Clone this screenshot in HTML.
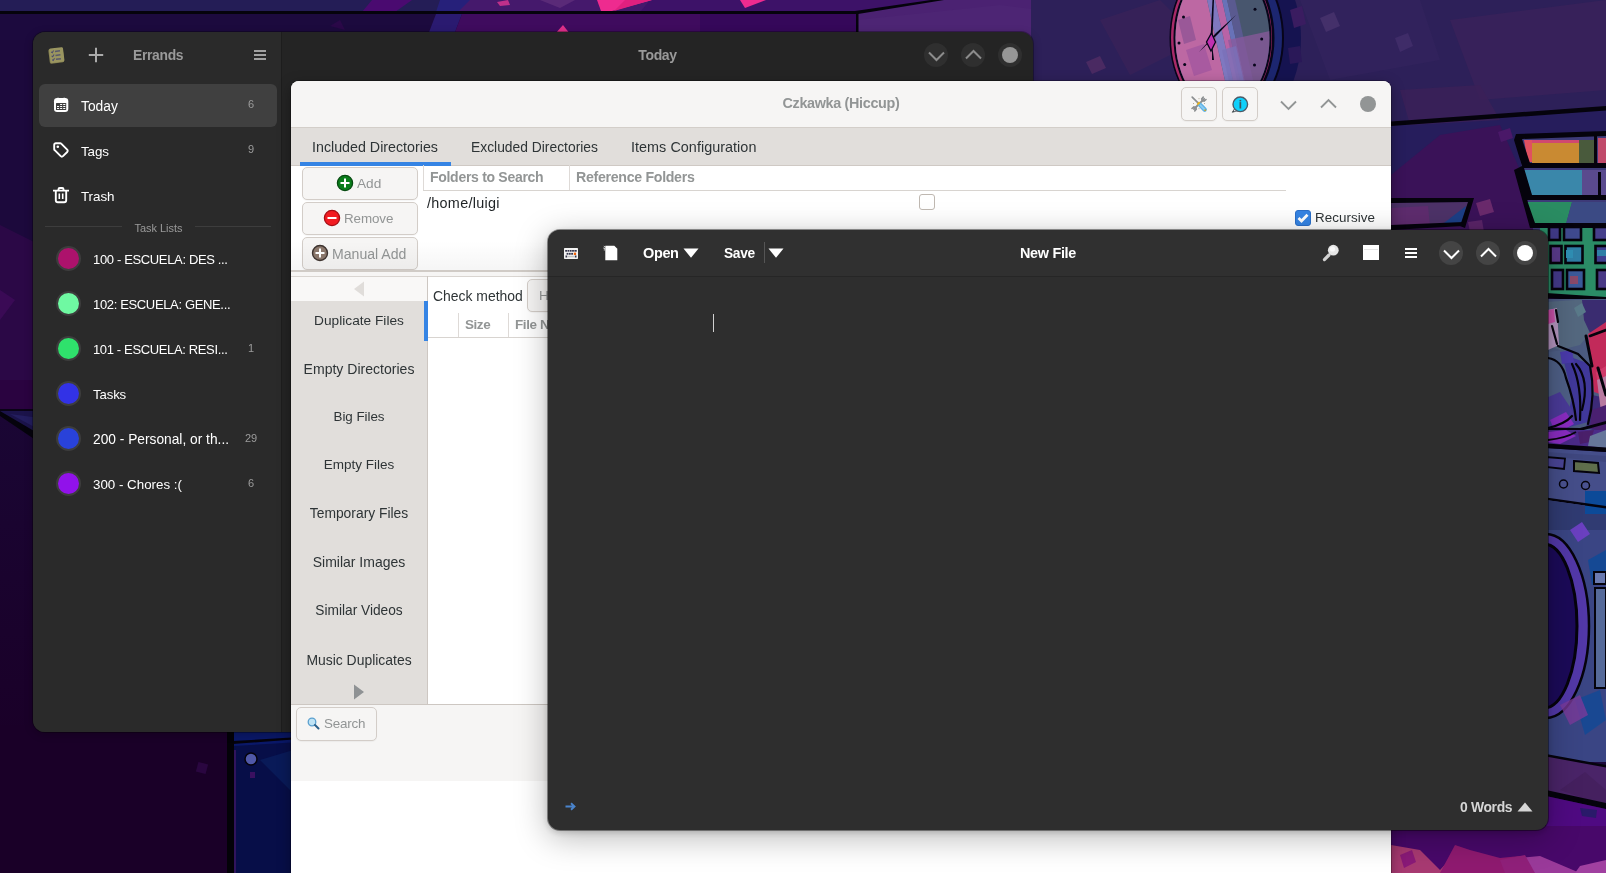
<!DOCTYPE html>
<html><head><meta charset="utf-8"><title>Desktop</title>
<style>
*{box-sizing:border-box;margin:0;padding:0}
html,body{width:1606px;height:873px;overflow:hidden;background:#1c093c}
body{position:relative;font-family:"Liberation Sans","DejaVu Sans",sans-serif;font-size:14px;color:#fff}
#bg{position:absolute;left:0;top:0;width:1606px;height:873px}
.t{position:absolute;white-space:nowrap;line-height:20px;height:20px;margin-top:1px}
.b{font-weight:700}
svg{position:absolute;overflow:visible}
/* Errands */
#err,#czk,#ed{will-change:transform}
#err{position:absolute;left:33px;top:32px;width:1000px;height:700px;border-radius:12px;background:#242424;overflow:hidden;box-shadow:0 0 0 1px rgba(0,0,0,.3),0 2px 8px rgba(0,0,0,.25)}
#err .side{position:absolute;left:0;top:0;width:248px;height:700px;background:#2a2a2a}
#err .sep{position:absolute;left:248px;top:0;width:1px;height:700px;background:#1d1d1d}
#err .row{position:absolute;left:6px;width:238px;height:43px;border-radius:6px}
#err .dot{position:absolute;left:22.7px;width:25px;height:25px;border-radius:50%;border:2px solid #3d3d3d}
#err .cnt{position:absolute;font-size:11px;color:#9c9c9c;line-height:14px;height:14px;text-align:center;width:30px;left:203px}
#err .li{left:60px}
.cbtn{position:absolute;width:24px;height:24px;border-radius:50%}
/* Czkawka */
#czk{position:absolute;left:291px;top:81px;width:1100px;height:800px;border-radius:8px 8px 0 0;background:#fff;overflow:hidden;box-shadow:0 0 0 1px rgba(0,0,0,.25),0 4px 14px rgba(0,0,0,.35);color:#2e3436}
#czk .gbtn{position:absolute;border:1px solid #d3cdc8;border-radius:5px;background:#f6f5f4;box-shadow:0 1px 1px rgba(0,0,0,.04)}
#czk .dim{color:#929595}
#czk .nb{left:0;width:136px;text-align:center}
/* editor */
#ed{position:absolute;left:548px;top:230px;width:1000px;height:600px;border-radius:12px;background:#2e2e2e;overflow:hidden;box-shadow:0 0 0 1px rgba(0,0,0,.4),0 2px 7px rgba(0,0,0,.2),0 7px 32px 1px rgba(0,0,0,.27)}
</style></head>
<body>
<svg id="bg" viewBox="0 0 1606 873">
<rect width="1606" height="873" fill="#1c093c"/>
<!-- top strip -->
<rect x="0" y="0" width="1040" height="12" fill="#241d56"/>
<polygon points="372,0 412,0 395,12 362,12" fill="#4a0a70"/>
<polygon points="452,0 1040,0 1040,12 440,12" fill="#45196c"/>
<polygon points="440,0 470,0 458,12 436,12" fill="#26207a"/>
<polygon points="650,0 940,0 857,12 640,12" fill="#3d1268"/>
<polygon points="497,2 508,0 510,5 500,6" fill="#c0308a"/>
<polygon points="540,0 575,0 560,8" fill="#5a2a78"/>
<polygon points="597,0 652,0 612,11 601,11" fill="#ee2b8f"/>
<polygon points="625,0 652,0 614,11" fill="#e0207f"/>
<polygon points="740,0 766,0 745,8" fill="#ee2b8f"/>
<rect x="0" y="14" width="1040" height="26" fill="#1c0a3e"/>
<polygon points="330,26 340,20 345,30" fill="#2a0848"/>
<polygon points="436,14 462,14 452,40 426,40" fill="#2a1a70"/>
<polygon points="462,14 860,14 860,40 452,40" fill="#3f0b5e"/>
<polygon points="700,14 858,14 858,40 700,40" fill="#35085a"/>
<polygon points="555,34 563,25 570,34" fill="#e0308a"/>
<polygon points="857,12 940,0 1040,0 1040,40 857,40" fill="#4b2272"/>
<polygon points="857,20 1000,5 1040,10 1040,40 857,40" fill="#4d2574"/>
<rect x="0" y="11" width="858" height="3" fill="#05030c"/>
<polygon points="855,11 938,-1 944,0 858,14" fill="#05030c"/>
<rect x="856" y="12" width="2.500" height="24" fill="#05030c"/>
<!-- top right wall -->
<rect x="1031" y="0" width="575" height="240" fill="#2d2059"/>
<polygon points="1100,20 1160,0 1200,40 1130,75" fill="#3a2258" opacity=".7"/>
<polygon points="1300,0 1420,0 1440,60 1330,80" fill="#32235c" opacity=".8"/>
<polygon points="1450,20 1606,0 1606,90 1480,100" fill="#39225a" opacity=".8"/>
<polygon points="1086,62 1100,56 1106,68 1092,74" fill="#4a2a62"/>
<polygon points="1320,18 1334,12 1340,26 1326,32" fill="#44306a"/>
<polygon points="1395,38 1408,33 1413,46 1400,52" fill="#3f2c68"/>
<!-- clock -->
<ellipse cx="1243" cy="38" rx="58" ry="86" fill="#151350"/>
<polygon points="1290,10 1302,6 1306,24 1294,28" fill="#3a1c60"/>
<polygon points="1288,48 1300,46 1302,62 1290,64" fill="#2a1858"/>
<ellipse cx="1227" cy="38" rx="57" ry="81" fill="#07051a"/>
<ellipse cx="1227" cy="38" rx="55" ry="79" fill="#1c2670"/>
<ellipse cx="1222" cy="38" rx="52.500" ry="77" fill="#07051a"/>
<ellipse cx="1221.500" cy="38" rx="50.500" ry="75" fill="#a82a68"/>
<ellipse cx="1222.500" cy="38" rx="49" ry="73.500" fill="#07051a"/>
<clipPath id="cf"><ellipse cx="1222.500" cy="38" rx="47" ry="71.500"/></clipPath>
<g clip-path="url(#cf)">
<rect x="1160" y="-50" width="130" height="180" fill="#48566e"/>
<polygon points="1160,-50 1196,-50 1236,130 1160,130" fill="#bd68a3"/>
<polygon points="1178,20 1190,16 1196,40 1184,44" fill="#9a5898"/>
<polygon points="1186,50 1204,44 1212,70 1194,76" fill="#a85aa0"/>
<polygon points="1196,-50 1204,-50 1244,130 1236,130" fill="#7f78c0"/>
<polygon points="1204,-50 1211,-50 1251,130 1244,130" fill="#b863a6"/>
<polygon points="1211,-50 1216,-50 1256,130 1251,130" fill="#6872b8"/>
<polygon points="1216,-50 1224,-50 1264,130 1256,130" fill="#5a5a90"/>
<polygon points="1228,40 1275,30 1275,130 1248,130" fill="#8a5a9c" opacity=".75"/>
<polygon points="1222,50 1236,46 1244,82 1230,86" fill="#7a70b8" opacity=".8"/>
</g>
<g fill="#07051a"><circle cx="1183.500" cy="17" r="1.500"/><circle cx="1179" cy="43" r="1.500"/><circle cx="1184.700" cy="64.500" r="1.500"/><circle cx="1255" cy="9.300" r="1.500"/><circle cx="1261.700" cy="39" r="1.500"/><circle cx="1254.500" cy="65" r="1.500"/></g>
<polygon points="1212.500,0 1214,0 1212.500,38 1210.500,38" fill="#07051a"/>
<polygon points="1212,44 1214,60 1212,60" fill="#07051a"/>
<polygon points="1199,52 1216,33 1236,15 1217.500,34.500" fill="#07051a"/>
<polygon points="1211.500,33 1215.500,42 1211,51 1206.500,42" fill="#c030b0" stroke="#07051a" stroke-width="1.300"/>
<!-- right area under shelf -->
<polygon points="1391,124 1606,108 1606,240 1391,240" fill="#261d5c"/>
<polygon points="1400,90 1480,85 1500,120 1410,125" fill="#3b2158" opacity=".8"/>
<polygon points="1440,135 1500,125 1520,170 1540,240 1391,240 1391,175" fill="#3a1258"/>
<polygon points="1391,121.500 1606,106 1606,110.500 1391,126" fill="#05030c"/>
<polygon points="1498,132 1510,128 1513,138 1501,142" fill="#4a1868"/>
<!-- bowl -->
<polygon points="1391,200 1472,200 1464,226 1391,228" fill="#4d3268"/>
<polygon points="1391,208 1428,206 1430,226 1391,228" fill="#5e2c6e"/>
<polygon points="1440,226 1466,206 1462,226" fill="#1c3f86"/>
<polygon points="1391,198 1474,198 1465,228 1460,226 1468,202 1391,203" fill="#05030c"/>
<polygon points="1391,225 1464,222 1464,226 1391,230" fill="#05030c"/>
<polygon points="1476,203 1490,199 1494,212 1480,216" fill="#6a2a6c"/>
<polygon points="1468,222 1482,220 1484,232 1470,232" fill="#5a2468"/>
<!-- stacked bins -->
<polygon points="1516,136 1606,132 1606,240 1535,240" fill="#3d3a78"/>
<polygon points="1524,140 1532,140 1532,162 1528,162" fill="#e05060"/>
<rect x="1532" y="142" width="47" height="21" fill="#c98a32"/>
<rect x="1532" y="140" width="47" height="3" fill="#d04870"/>
<rect x="1579" y="140" width="17" height="24" fill="#495a3c"/>
<rect x="1598" y="138" width="8" height="26" fill="#c04a6a"/>
<polygon points="1524,170 1582,170 1582,196 1532,196" fill="#3a87aa"/>
<rect x="1582" y="170" width="24" height="26" fill="#5a4a8e"/>
<polygon points="1524,202 1572,202 1566,224 1534,224" fill="#2a8c62"/>
<polygon points="1572,202 1606,202 1606,224 1566,224" fill="#3b4a84"/>
<polygon points="1516,134 1606,131 1606,136 1522,139 1530,163 1606,163 1606,168 1524,168 1532,195 1606,195 1606,200 1527,200 1535,223 1606,223 1606,228 1530,228 1514,170 1522,166 1514,140" fill="#05030c"/>
<rect x="1594" y="134" width="3" height="32" fill="#05030c"/>
<rect x="1598" y="172" width="3" height="24" fill="#05030c"/>

<!-- right strip: basket -->
<rect x="1540" y="228" width="66" height="70" fill="#2b8c66"/>
<rect x="1549.0" y="227" width="11" height="13" fill="#403a88" stroke="#05030c" stroke-width="2.6"/>
<rect x="1564.0" y="227" width="17" height="13" fill="#3f4a8e" stroke="#05030c" stroke-width="2.6"/>
<rect x="1594.0" y="227" width="14" height="13" fill="#46408c" stroke="#05030c" stroke-width="2.6"/>
<rect x="1550.5" y="246" width="11" height="17" fill="#5a3a8a" stroke="#05030c" stroke-width="2.6"/>
<rect x="1565.5" y="246" width="17" height="17" fill="#2f7fa6" stroke="#05030c" stroke-width="2.6"/>
<rect x="1595.5" y="246" width="14" height="17" fill="#3f3f90" stroke="#05030c" stroke-width="2.6"/>
<rect x="1552.0" y="270" width="11" height="19" fill="#443a8a" stroke="#05030c" stroke-width="2.6"/>
<rect x="1567.0" y="270" width="17" height="19" fill="#3b5a9a" stroke="#05030c" stroke-width="2.6"/>
<rect x="1597.0" y="270" width="14" height="19" fill="#4a3a86" stroke="#05030c" stroke-width="2.6"/>
<rect x="1566" y="250" width="7" height="8" fill="#2f8fb4"/><rect x="1570" y="276" width="8" height="8" fill="#8a4a6a"/><rect x="1597" y="250" width="9" height="6" fill="#2f7fa6"/>
<polygon points="1546,293 1606,297 1606,302 1546,298" fill="#05030c"/>
<!-- clothes -->
<rect x="1546" y="299" width="60" height="135" fill="#4b5a80"/>
<polygon points="1546,302 1575,300 1606,300 1606,335 1590,333 1580,345 1560,350 1546,345" fill="#54687f"/>
<polygon points="1582,300 1606,300 1606,325 1590,333 1584,320" fill="#3a2c70"/>
<polygon points="1574,308 1582,303 1586,312 1578,317" fill="#5a7a8a"/>
<polygon points="1548,310 1557,308 1559,345 1548,350" fill="#b494be"/>
<polygon points="1548,310 1554,309 1555,322 1548,324" fill="#c850a8"/>
<polygon points="1588,334 1606,322 1606,396 1594,392" fill="#c22a5a"/>
<polygon points="1596,372 1606,366 1606,396 1599,394" fill="#d03a6a"/>
<polygon points="1546,352 1566,350 1590,362 1592,392 1588,420 1546,432" fill="#4e5f86"/>
<polygon points="1562,354 1590,364 1592,395 1588,422 1566,428 1572,395" fill="#40389a"/>
<polygon points="1560,352 1572,350 1574,362 1562,364" fill="#4a3aaa"/>
<polygon points="1546,398 1560,392 1572,410 1580,420 1546,434" fill="#4a3a98"/>
<polygon points="1550,420 1566,412 1574,424 1556,434" fill="#8a2cc2"/>
<polygon points="1592,395 1606,398 1606,434 1586,428" fill="#3c2a78"/>
<polygon points="1597,380 1606,376 1606,415 1601,412" fill="#b87aa0"/>
<polygon points="1592,410 1606,405 1606,432 1590,428" fill="#4a2070"/>
<g fill="none" stroke="#05030c" stroke-width="2.200" stroke-linecap="round">
<path d="M1556,310 L1558,322 M1552,326 L1557,344"/>
<path d="M1558,346 L1578,354 L1590,366 Q1596,395 1588,424"/>
<path d="M1548,358 Q1562,360 1566,378 Q1574,400 1576,420"/>
<path d="M1572,364 Q1582,385 1580,420"/><path d="M1576,364 Q1590,380 1582,410"/>
<path d="M1586,336 L1592,366" stroke-width="3"/>
<path d="M1590,336 L1606,330" stroke-width="2.600"/>
<path d="M1598,368 L1606,395" stroke-width="3"/>
<path d="M1548,428 Q1565,424 1572,416"/>
</g>
<polygon points="1546,427.500 1580,428 1606,421 1606,424 1580,431 1546,430.500" fill="#05030c"/>
<!-- washing machine -->
<rect x="1546" y="430" width="60" height="18" fill="#4a2a88"/>
<polygon points="1548,432 1566,430 1576,436 1560,444 1548,442" fill="#8a2cc2"/>
<polygon points="1578,432 1594,430 1590,442 1580,444" fill="#4a1f6a"/>
<polygon points="1590,436 1606,430 1606,448 1588,446" fill="#66769a"/>
<path d="M1548,440 Q1566,438 1576,432" fill="none" stroke="#05030c" stroke-width="1.800"/>
<polygon points="1546,448 1606,452 1606,512 1546,502" fill="#454e8a"/>
<polygon points="1546,443.500 1606,447.500 1606,452 1546,448" fill="#05030c"/>
<polygon points="1546,452 1606,456 1606,462 1546,456" fill="#3f477f"/>
<polygon points="1546,457 1565,458.500 1564,469 1546,467" fill="#4a4596" stroke="#05030c" stroke-width="1.800"/>
<polygon points="1574,461 1598,463 1599,473 1574,471" fill="#5f6e4c" stroke="#05030c" stroke-width="2"/>
<circle cx="1563.500" cy="484" r="4" fill="#4a5290" stroke="#05030c" stroke-width="1.500"/>
<circle cx="1585.500" cy="485.500" r="4" fill="#4a5290" stroke="#05030c" stroke-width="1.500"/>
<rect x="1585" y="491" width="21" height="23" fill="#0c4a98"/>
<polygon points="1546,497.500 1606,506 1606,508.500 1546,500" fill="#05030c"/>
<polygon points="1546,500 1585,505.500 1585,514 1606,514 1606,540 1546,540" fill="#303b72"/>
<rect x="1546" y="530" width="60" height="232" fill="#3a4584"/>
<ellipse cx="1546" cy="626" rx="43" ry="92" fill="#5238a8"/>
<ellipse cx="1546" cy="626" rx="43" ry="92" fill="none" stroke="#05030c" stroke-width="2.5"/>
<ellipse cx="1544" cy="626" rx="33" ry="82" fill="#1b0a58"/>
<ellipse cx="1544" cy="626" rx="33" ry="82" fill="none" stroke="#05030c" stroke-width="3"/>
<polygon points="1570,530 1582,522 1590,534 1578,542" fill="#6a40c0"/>
<polygon points="1588,560 1606,550 1606,580 1592,585" fill="#0c4a98" opacity=".8"/>
<polygon points="1575,700 1600,690 1606,720 1585,735" fill="#0c4a98" opacity=".7"/>
<polygon points="1560,705 1580,695 1588,715 1570,725" fill="#7a3a9a" opacity=".8"/>
<rect x="1595" y="588" width="11" height="100" fill="#566a9a" stroke="#05030c" stroke-width="2"/>
<rect x="1594" y="572" width="12" height="12" fill="#6a7ab0" stroke="#05030c" stroke-width="2"/>
<polygon points="1546,755 1606,766 1606,808 1546,795" fill="#4a2468"/>
<polygon points="1560,790 1585,772 1606,790 1606,806" fill="#45205f"/>
<polygon points="1546,754 1606,765 1606,767.500 1546,756.500" fill="#05030c"/>
<polygon points="1546,790 1606,803 1606,809 1546,796" fill="#05030c"/>
<polygon points="1546,796 1606,809 1606,873 1546,873" fill="#4f0a82"/>
<polygon points="1580,808 1597,810 1596,818 1582,816" fill="#2a1a6a"/>
<!-- bottom right -->
<rect x="1391" y="826" width="215" height="47" fill="#48086a"/>

<polygon points="1391,845 1420,850 1440,870 1460,848 1490,873 1391,873" fill="#a83a72"/>
<polygon points="1440,873 1455,845 1470,850 1500,858 1520,856 1535,873" fill="#8f1a70"/>
<polygon points="1400,855 1412,850 1416,862 1404,868" fill="#8a1a78"/>
<polygon points="1520,858 1540,856 1580,873 1525,873" fill="#9a3a9a"/>
<polygon points="1580,866 1606,860 1606,873 1575,873" fill="#a040a0"/>
<polygon points="1500,860 1525,855 1535,873 1505,873" fill="#90207a"/>
<!-- left strip -->
<polygon points="0,225 40,245 40,412 0,412" fill="#2b0846"/>
<polygon points="0,380 40,380 40,410 0,410" fill="#2a0340"/>
<polygon points="0,290 15,300 0,320" fill="#3a0a55"/>
<polygon points="0,411 40,411 40,445 0,420" fill="#1b134a"/>
<polygon points="10,414 40,418 40,430" fill="#231d5e"/>
<rect x="0" y="409" width="40" height="2" fill="#0a0316"/>
<polygon points="0,411 40,434.500 40,447 0,417.500" fill="#05030c"/>
<linearGradient id="lg1" x1="0" y1="0" x2="0" y2="1"><stop offset="0" stop-color="#1a0634"/><stop offset="1" stop-color="#1a0028"/></linearGradient>
<polygon points="0,416 40,443 40,740 0,740" fill="url(#lg1)"/>
<!-- bottom left -->
<rect x="0" y="725" width="300" height="148" fill="#1a0028"/>
<rect x="233" y="725" width="67" height="148" fill="#070e48"/>
<polygon points="233,725 300,725 300,742 233,746" fill="#0a1868"/>
<polygon points="260,760 300,748 300,800" fill="#0a2060" opacity=".7"/>
<polygon points="233,741 300,737 300,739 233,744" fill="#05030c"/>
<rect x="227" y="725" width="7" height="148" fill="#030208"/>
<polygon points="234,750 236,750 236,873 234,873" fill="#5a1a70" opacity=".5"/>
<circle cx="251" cy="759" r="6" fill="#5058a8" stroke="#05030c" stroke-width="1.5"/>
<rect x="250" y="772" width="5" height="6" fill="#3a1060"/>
<rect x="197" y="763" width="10" height="10" fill="#2a0640" transform="rotate(15 202 768)"/>
</svg>
<div id="err">
 <div class="side"></div><div class="sep"></div>
 <!-- header -->
 <svg style="left:14.500px;top:14.500px" width="17" height="17" viewBox="0 0 17 17"><g transform="rotate(-7 8.500 8.500)"><rect x="1" y="1.500" width="14.500" height="14.500" rx="1.500" fill="#858050"/><rect x="1.800" y="0.800" width="14" height="14.500" rx="1.500" fill="#9a9560"/><g stroke="#4a4a6e" fill="none"><path d="M7.500 4.300h5M7.500 8.300h5M7.500 12.200h5" stroke-width="1.500" opacity=".8"/><path d="M3.600 4.200l1 1 1.600-2M3.600 8.200l1 1 1.600-2M3.600 12.100l1 1 1.600-2" stroke-width="1"/></g></g></svg>
 <svg style="left:55px;top:15px" width="16" height="16" viewBox="0 0 16 16"><path d="M8 0.800v14.400M0.800 8h14.400" stroke="#ababab" stroke-width="2" fill="none"/></svg>
 <div class="t b" style="left:100px;top:12px;color:#9a9a9a;font-size:13.88px;letter-spacing:-0.324px">Errands</div>
 <div style="position:absolute;left:221px;top:18px;width:12px;height:2px;background:#a2a2a2;box-shadow:0 4px 0 #a2a2a2,0 8px 0 #a2a2a2"></div>
 <div class="t b" style="left:249px;width:751px;text-align:center;top:12px;font-size:14.0px;letter-spacing:-0.344px;color:#9a9a9a">Today</div>
 <div class="cbtn" style="left:891px;top:11px;background:#2f2f2f"></div>
 <div class="cbtn" style="left:928px;top:11px;background:#2f2f2f"></div>
 <div class="cbtn" style="left:965px;top:11px;background:#2f2f2f"></div>
 <svg style="left:894.500px;top:19px" width="17" height="11" viewBox="0 0 17 11"><path d="M1 1.500L8.500 9L16 1.500" stroke="#8c8c8c" stroke-width="2" fill="none"/></svg>
 <svg style="left:931.500px;top:16.500px" width="17" height="11" viewBox="0 0 17 11"><path d="M1 9.500L8.500 2L16 9.500" stroke="#8c8c8c" stroke-width="2" fill="none"/></svg>
 <div style="position:absolute;left:969px;top:15px;width:16px;height:16px;border-radius:50%;background:#969696"></div>
 <!-- rows -->
 <div class="row" style="top:52px;background:#404040"></div>
 <svg style="left:21px;top:65px" width="15" height="15" viewBox="0 0 15 15"><rect x="2.9" y="0.700" width="2.300" height="3" rx=".6" fill="#fff"/><rect x="9.100" y="0.700" width="2.300" height="3" rx=".6" fill="#fff"/><rect x="0" y="1" width="14.3" height="14" rx="3.2" fill="#fff"/><rect x="2" y="6" width="10.2" height="7" rx=".6" fill="#404040"/><g fill="#fff"><rect x="6.1" y="7" width="2.1" height="1"/><rect x="9.2" y="7" width="2.1" height="1"/><rect x="3" y="9" width="2.1" height="1"/><rect x="6.1" y="9" width="2.1" height="1"/><rect x="9.2" y="9" width="2.1" height="1"/><rect x="3" y="11" width="2.1" height="1"/><rect x="6.1" y="11" width="2.1" height="1"/><rect x="9.2" y="11" width="2.1" height="1"/></g></svg>
 <div class="t" style="left:48px;top:64px;font-size:13.8px">Today</div>
 <div class="cnt" style="top:65px">6</div>
 <svg style="left:19.500px;top:109.500px" width="16" height="16" viewBox="0 0 16 16"><path d="M1.200 2.800a1.600 1.600 0 0 1 1.600-1.600h4.300a1.600 1.600 0 0 1 1.100.5l6 6a1.600 1.600 0 0 1 0 2.300l-4.200 4.200a1.600 1.600 0 0 1-2.300 0l-6-6a1.600 1.600 0 0 1-.5-1.100z" fill="none" stroke="#fff" stroke-width="1.900"/><circle cx="4.800" cy="4.800" r="1.300" fill="#fff"/></svg>
 <div class="t" style="left:48px;top:109px;font-size:13.4px;letter-spacing:-0.1px">Tags</div>
 <div class="cnt" style="top:110px">9</div>
 <svg style="left:20px;top:155px" width="16" height="16" viewBox="0 0 16 16"><path d="M0 3.600h16M5.500 3.400V2.200a1.200 1.200 0 0 1 1.200-1.200h2.600a1.200 1.200 0 0 1 1.200 1.200v1.200M2.800 3.800v9.400a2 2 0 0 0 2 2h6.400a2 2 0 0 0 2-2V3.800" fill="none" stroke="#fff" stroke-width="1.900"/><path d="M6.300 6.500v5.500M9.700 6.500v5.500" stroke="#fff" stroke-width="1.600"/></svg>
 <div class="t" style="left:48px;top:154px;font-size:13.4px;letter-spacing:-0.07px">Trash</div>
 <!-- task lists separator -->
 <div style="position:absolute;left:12px;top:194px;width:77px;height:1px;background:#3d3d3d"></div>
 <div style="position:absolute;left:162px;top:194px;width:76px;height:1px;background:#3d3d3d"></div>
 <div class="t" style="left:89px;width:73px;text-align:center;top:185px;color:#9a9a9a;font-size:10.95px">Task Lists</div>
 <!-- lists -->
 <div class="dot" style="top:214px;background:#ad126c"></div>
 <div class="t li" style="top:217px;font-size:13px;letter-spacing:-0.35px">100 - ESCUELA: DES ...</div>
 <div class="dot" style="top:259px;background:#6ff9a2"></div>
 <div class="t li" style="top:262px;font-size:13px;letter-spacing:-0.35px">102: ESCUELA: GENE...</div>
 <div class="dot" style="top:304px;background:#2fe16c"></div>
 <div class="t li" style="top:307px;font-size:13px;letter-spacing:-0.36px">101 - ESCUELA: RESI...</div>
 <div class="cnt" style="top:309px">1</div>
 <div class="dot" style="top:349px;background:#3232e6"></div>
 <div class="t li" style="top:352px;font-size:13.2px;letter-spacing:-0.13px">Tasks</div>
 <div class="dot" style="top:394px;background:#2942d9"></div>
 <div class="t li" style="top:397px;font-size:13.75px">200 - Personal, or th...</div>
 <div class="cnt" style="top:399px">29</div>
 <div class="dot" style="top:439px;background:#9112ea"></div>
 <div class="t li" style="top:442px;font-size:13.35px">300 - Chores :(</div>
 <div class="cnt" style="top:444px">6</div>
</div>
<div id="czk">
 <!-- titlebar -->
 <div style="position:absolute;left:0;top:0;width:1100px;height:46px;background:#f6f5f4"></div>
 <div style="position:absolute;left:0;top:46px;width:1100px;height:1px;background:#d3cec9"></div>
 <div class="t b dim" style="left:0;width:1100px;text-align:center;top:11px;font-size:14.38px;letter-spacing:-0.329px">Czkawka (Hiccup)</div>
 <div class="gbtn" style="left:890px;top:6px;width:36px;height:34px"></div>
 <div class="gbtn" style="left:931px;top:6px;width:36px;height:34px"></div>
 <svg style="left:900px;top:15px" width="16" height="16" viewBox="0 0 16 16"><g fill="none" stroke-linecap="round"><path d="M13.200 2.800L3 13" stroke="#8b8e90" stroke-width="1.900"/><path d="M12.300 1l-1.600 2 .6 1.700 1.800.5 1.900-1.700" stroke="#8b8e90" stroke-width="1.600"/><path d="M3.700 15l1.600-2-.6-1.700-1.800-.5-1.900 1.700" stroke="#8b8e90" stroke-width="1.600"/><path d="M1.200 1.200L7.500 7.300" stroke="#8b8e90" stroke-width="1.700"/><path d="M9 8.800L13.700 13.600" stroke="#5fb2e6" stroke-width="4.400"/><path d="M9.500 9.300L13.200 13.100" stroke="#8ccdf2" stroke-width="1.800"/><path d="M6.800 6.700L8.200 8.100" stroke="#e8b21e" stroke-width="3.400" stroke-linecap="butt"/></g><circle cx="14.200" cy="14.200" r="0.900" fill="#c9a227"/><g fill="#6e5f3a"><circle cx="8" cy="2.800" r=".45"/><circle cx="2.500" cy="7.500" r=".45"/><circle cx="13.500" cy="7.500" r=".45"/><circle cx="8" cy="12.800" r=".45"/></g></svg>
 <svg style="left:940px;top:14.700px" width="18" height="18" viewBox="0 0 18 18"><path d="M1.300 16.300l2.600-4.200 2.800 2.600z" fill="#e4e8ec" stroke="#2a3338" stroke-width=".7"/><path d="M1.300 16.300l1.200-1.900 1 .9z" fill="#2a3338"/><circle cx="9.300" cy="8.300" r="7.300" fill="#0fd0fb" stroke="#4d5b68" stroke-width="1.400"/><rect x="8.500" y="3.900" width="1.700" height="1.500" fill="#3c5560"/><rect x="8.500" y="6.100" width="1.700" height="6.400" fill="#3c5560"/></svg>
 <svg style="left:989px;top:19px" width="17" height="11" viewBox="0 0 17 11"><path d="M1 1.500L8.500 9L16 1.500" stroke="#929595" stroke-width="1.900" fill="none"/></svg>
 <svg style="left:1029px;top:17px" width="17" height="11" viewBox="0 0 17 11"><path d="M1 9.500L8.500 2L16 9.500" stroke="#929595" stroke-width="1.900" fill="none"/></svg>
 <div style="position:absolute;left:1069px;top:15px;width:16px;height:16px;border-radius:50%;background:#929595"></div>
 <!-- notebook tabs -->
 <div style="position:absolute;left:0;top:47px;width:1100px;height:37px;background:#e1dedb"></div>
 <div style="position:absolute;left:0;top:84px;width:1100px;height:1px;background:#cfc9c4"></div>
 <div style="position:absolute;left:9px;top:81px;width:151px;height:4px;background:#3584e4"></div>
 <div class="t" style="left:21px;top:55px;font-size:14.26px">Included Directories</div>
 <div class="t" style="left:180px;top:55px;font-size:13.85px">Excluded Directories</div>
 <div class="t" style="left:340px;top:55px;font-size:14.4px;letter-spacing:0.034px">Items Configuration</div>
 <!-- buttons -->
 <div class="gbtn" style="left:11px;top:86px;width:116px;height:33px"></div>
 <div class="gbtn" style="left:11px;top:121px;width:116px;height:33px"></div>
 <div class="gbtn" style="left:11px;top:156px;width:116px;height:33px"></div>
 <svg style="left:46px;top:94px" width="16" height="16" viewBox="0 0 16 16"><circle cx="8" cy="8" r="7.600" fill="#0a7d1b" stroke="#064a10" stroke-width="1.300"/><path d="M8 3.500v9M3.500 8h9" stroke="#fff" stroke-width="2"/></svg>
 <div class="t dim" style="left:66px;top:92px;font-size:13.66px">Add</div>
 <svg style="left:33px;top:129px" width="16" height="16" viewBox="0 0 16 16"><circle cx="8" cy="8" r="7.600" fill="#f21c22" stroke="#a50e14" stroke-width="1.300"/><path d="M3.500 8h9" stroke="#fff" stroke-width="2.200"/></svg>
 <div class="t dim" style="left:53px;top:127px;font-size:13.4px;letter-spacing:-0.1px">Remove</div>
 <svg style="left:21px;top:164px" width="16" height="16" viewBox="0 0 16 16"><circle cx="8" cy="8" r="7.500" fill="#8c786c" stroke="#3e3430" stroke-width="1.400"/><path d="M8 3.500v9M3.500 8h9" stroke="#fff" stroke-width="2"/></svg>
 <div class="t dim" style="left:41px;top:161.5px;font-size:14.09px">Manual Add</div>
 <!-- included dirs tree -->
 <div style="position:absolute;left:132px;top:109px;width:863px;height:1px;background:#d8d4d0"></div>
 <div style="position:absolute;left:278px;top:84px;width:1px;height:25px;background:#dedad7"></div>
 <div style="position:absolute;left:132px;top:84px;width:1px;height:25px;background:#dedad7"></div>
 <div class="t b dim" style="left:139px;top:85px;font-size:14.03px;letter-spacing:-0.298px">Folders to Search</div>
 <div class="t b dim" style="left:285px;top:85px;font-size:14.19px;letter-spacing:-0.313px">Reference Folders</div>
 <div class="t" style="left:136px;top:111px;color:#1e2224;font-size:14.4px;letter-spacing:0.287px">/home/luigi</div>
 <div style="position:absolute;left:628px;top:113px;width:16px;height:16px;border:1px solid #bfb8b1;border-radius:3px;background:#fff"></div>
 <div style="position:absolute;left:1004px;top:129px;width:16px;height:16px;border-radius:3px;background:#3584e4;border:1px solid #2a6fc9"></div>
 <svg style="left:1006px;top:132px" width="12" height="10" viewBox="0 0 12 10"><path d="M1.500 5L4.500 8L10.500 1.800" stroke="#fff" stroke-width="2.800" fill="none"/></svg>
 <div class="t" style="left:1024px;top:126px;font-size:13.4px;letter-spacing:0.04px">Recursive</div>
 <div style="position:absolute;left:0;top:160px;width:1100px;height:30px;background:linear-gradient(rgba(0,0,0,0),rgba(0,0,0,.04))"></div>
 <!-- paned handle -->
 <div style="position:absolute;left:0;top:189px;width:1100px;height:7px;background:#f6f5f4;border-top:2px solid #d0cbc6;border-bottom:1px solid #d9d5d1"></div>
 <!-- left notebook -->
 <div style="position:absolute;left:0;top:196px;width:136px;height:24px;background:#f9f8f7"></div>
 <div style="position:absolute;left:0;top:220px;width:136px;height:403px;background:#e1dedb"></div>
 <div style="position:absolute;left:136px;top:195px;width:1px;height:428px;background:#cdc7c2"></div>
 <div style="position:absolute;left:133px;top:220px;width:4px;height:40px;background:#3584e4"></div>
 <svg style="left:62px;top:199px" width="12" height="18" viewBox="0 0 12 18"><path d="M11 1.500v15L1 9z" fill="#e0ddda"/></svg>
 <svg style="left:62px;top:602px" width="12" height="18" viewBox="0 0 12 18"><path d="M1 1.500v15L11 9z" fill="#8f9294"/></svg>
 <div class="t nb" style="top:229px;font-size:13.69px">Duplicate Files</div>
 <div class="t nb" style="top:277px;font-size:14.05px">Empty Directories</div>
 <div class="t nb" style="top:325px;font-size:13.4px;letter-spacing:-0.054px">Big Files</div>
 <div class="t nb" style="top:373px;font-size:13.5px">Empty Files</div>
 <div class="t nb" style="top:421px;font-size:13.85px">Temporary Files</div>
 <div class="t nb" style="top:470px;font-size:13.99px">Similar Images</div>
 <div class="t nb" style="top:519px;font-size:13.73px">Similar Videos</div>
 <div class="t nb" style="top:568px;font-size:13.93px">Music Duplicates</div>
 <!-- right content -->
 <div class="t" style="left:142px;top:203.5px;font-size:13.93px">Check method</div>
 <div class="gbtn" style="left:236px;top:198px;width:120px;height:33px"></div>
 <div class="t dim" style="left:248px;top:204px;font-size:13.6px">Hash</div>
 <div style="position:absolute;left:137px;top:256px;width:963px;height:1px;background:#d8d4d0"></div>
 <div style="position:absolute;left:167px;top:232px;width:1px;height:24px;background:#dedad7"></div>
 <div style="position:absolute;left:217px;top:232px;width:1px;height:24px;background:#dedad7"></div>
 <div class="t b dim" style="left:174px;top:233px;font-size:13.48px;letter-spacing:-0.444px">Size</div>
 <div class="t b dim" style="left:224px;top:233px;font-size:13.48px;letter-spacing:-0.404px">File Name</div>
 <!-- bottom -->
 <div style="position:absolute;left:0;top:623px;width:1100px;height:77px;background:#f6f5f4;border-top:1px solid #cdc7c2"></div>
 <div class="gbtn" style="left:5px;top:626px;width:81px;height:34px"></div>
 <svg style="left:16px;top:636px" width="13" height="13" viewBox="0 0 13 13"><circle cx="5" cy="5" r="3.800" fill="#bfe3f5" stroke="#5aa0cf" stroke-width="1.300"/><path d="M8 8l3.500 3.500" stroke="#2a5f8a" stroke-width="2" stroke-linecap="round"/></svg>
 <div class="t dim" style="left:33px;top:632px;font-size:13.4px;letter-spacing:-0.21px">Search</div>
</div>
<div id="ed">
 <div style="position:absolute;left:0;top:0;width:1000px;height:46px;background:#303030"></div>
 <div style="position:absolute;left:0;top:45.5px;width:1000px;height:1.5px;background:#262626"></div>
 <!-- keyboard icon -->
 <svg style="left:16px;top:18.3px" width="14" height="11" viewBox="0 0 14 11"><rect x="0" y="0" width="14" height="11" rx=".8" fill="#f4f4f4"/><g fill="#34344a"><rect x="1.200" y="2" width="1.800" height="1.700"/><rect x="3.500" y="2" width="1.800" height="1.700"/><rect x="5.800" y="2" width="1.800" height="1.700"/><rect x="8.100" y="2" width="1.800" height="1.700"/><rect x="10.400" y="2" width="2.300" height="1.700"/><rect x="2.600" y="4.900" width="1.800" height="1.800"/><rect x="4.900" y="4.900" width="1.800" height="1.800"/><rect x="7.200" y="4.900" width="1.800" height="1.800"/><rect x="1.500" y="7.500" width="1.700" height="2"/><rect x="10.800" y="7.500" width="1.700" height="2"/></g><rect x="3.600" y="7.800" width="6.800" height="1.500" fill="#c4c4c4"/><rect x="9.800" y="4.600" width="2.300" height="2.400" fill="#f0640a"/></svg>
 <!-- new doc icon -->
 <svg style="left:54px;top:14.5px" width="16" height="16" viewBox="0 0 16 16"><path d="M3.300 0.700h9l3 3v11.500h-12z" fill="#fff"/><path d="M1.800 1.200l1.500 1M1.300 3l1.800.6M1.800 5l1.300-.2" stroke="#eee" stroke-width=".9"/></svg>
 <div class="t b" style="left:95px;top:12px;font-size:14.53px;letter-spacing:-0.383px">Open</div>
 <svg style="left:135px;top:18px" width="16" height="10" viewBox="0 0 16 10"><path d="M0.500 0.500h15L8 9.800z" fill="#fff"/></svg>
 <div class="t b" style="left:176px;top:12.6px;font-size:13.78px;letter-spacing:-0.344px">Save</div>
 <div style="position:absolute;left:216px;top:12px;width:1px;height:21px;background:#555"></div>
 <svg style="left:220px;top:18px" width="16" height="10" viewBox="0 0 16 10"><path d="M0.500 0.500h15L8 9.800z" fill="#fff"/></svg>
 <div class="t b" style="left:0;width:1000px;text-align:center;top:12px;font-size:14.42px;letter-spacing:-0.314px">New File</div>
 <!-- right icons -->
 <svg style="left:774px;top:14px" width="18" height="18" viewBox="0 0 18 18"><path d="M2.400 15.600L7 11" stroke="#d2d2d2" stroke-width="3.200" stroke-linecap="round"/><circle cx="11.300" cy="6.200" r="5.400" fill="#e6e6e6"/><circle cx="10.500" cy="5" r="2.600" fill="#f8f8f8"/></svg>
 <div style="position:absolute;left:815px;top:15px;width:16px;height:15px;background:#fff"></div>
 <div style="position:absolute;left:816px;top:19px;width:14px;height:1px;background:#e4e4e4"></div>
 <div style="position:absolute;left:857px;top:18px;width:12px;height:2px;background:#fff;box-shadow:0 4px 0 #fff,0 8px 0 #fff"></div>
 <div class="cbtn" style="left:891px;top:11px;background:#444"></div>
 <div class="cbtn" style="left:928px;top:11px;background:#444"></div>
 <div class="cbtn" style="left:965px;top:11px;background:#444"></div>
 <svg style="left:894.5px;top:19px" width="17" height="11" viewBox="0 0 17 11"><path d="M1 1.5L8.5 9L16 1.5" stroke="#fff" stroke-width="2" fill="none"/></svg>
 <svg style="left:931.5px;top:16.5px" width="17" height="11" viewBox="0 0 17 11"><path d="M1 9.5L8.5 2L16 9.5" stroke="#fff" stroke-width="2" fill="none"/></svg>
 <div style="position:absolute;left:969px;top:15px;width:16px;height:16px;border-radius:50%;background:#fff"></div>
 <!-- caret -->
 <div style="position:absolute;left:165px;top:84px;width:1px;height:18px;background:#d0d0d0"></div>
 <!-- bottom -->
 <svg style="left:17px;top:572px" width="11" height="9" viewBox="0 0 11 9"><path d="M0.500 4.500h8.500M6 1.200L9.500 4.500L6 7.800" stroke="#4a84cc" stroke-width="1.900" fill="none"/></svg>
 <div class="t b" style="left:912px;top:566px;color:#d6d6d6;font-size:13.92px;letter-spacing:-0.337px">0 Words</div>
 <svg style="left:969px;top:572px" width="16" height="10" viewBox="0 0 16 10"><path d="M0.500 9.500h15L8 0.500z" fill="#d6d6d6"/></svg>
</div>
</body></html>
